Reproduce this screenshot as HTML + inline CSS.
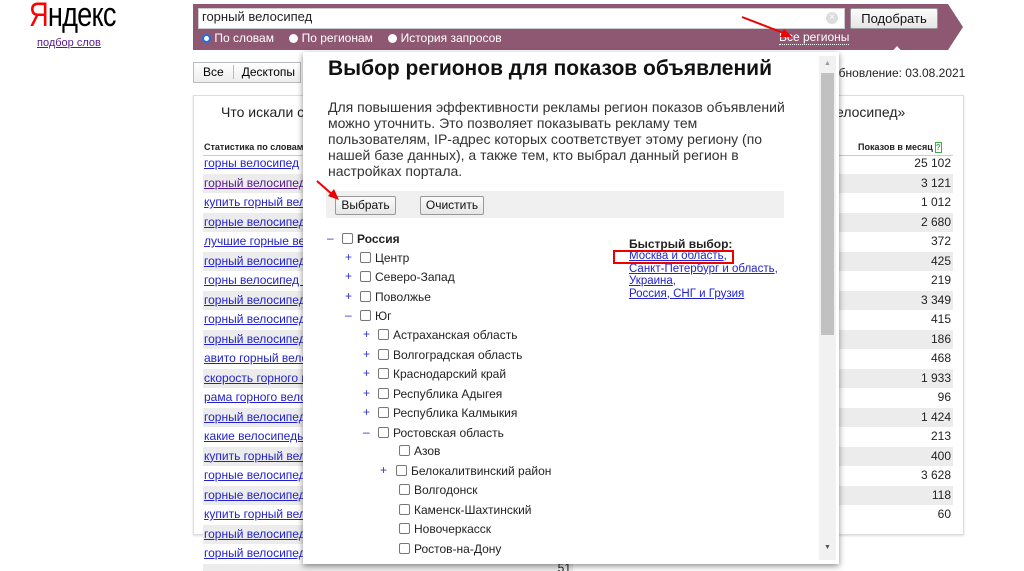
<!DOCTYPE html>
<html><head><meta charset="utf-8">
<style>
*{margin:0;padding:0;box-sizing:border-box}
html,body{width:1024px;height:571px;overflow:hidden}
body{background:#fff;font-family:"Liberation Sans",Arial,sans-serif;position:relative;color:#000}
.a{position:absolute}
a,.lnk{color:#1a0dab;text-decoration:underline}
.row{position:absolute;left:203px;width:750px;height:19.5px;font-size:12px;line-height:19.5px;white-space:nowrap;overflow:hidden}
.row.g{background:#ececec}
.row .k{position:absolute;left:1px;color:#2222cc;text-decoration:underline}
.row .n{position:absolute;right:2px;color:#222}
.tr{position:absolute;font-size:12px;color:#222;white-space:nowrap;line-height:16px}
.cb{display:inline-block;width:11px;height:11px;border:1px solid #777;border-radius:2px;background:#fff;vertical-align:-1px;margin-right:4px}
.pm{position:absolute;color:#3333cc;font-size:12px}
.btn{position:absolute;border:1px solid #999;border-radius:2px;background:linear-gradient(#fbfbfb,#e6e6e6);font-size:12px;text-align:center;line-height:17px;color:#111}
</style></head><body>
<!-- logo -->
<div class="a" style="left:29px;top:-4px;font-size:34px;letter-spacing:-1px;color:#000;transform:scaleX(0.8);transform-origin:0 0;white-space:nowrap"><span style="color:#f00">Я</span>ндекс</div>
<div class="a" style="left:37px;top:37px;font-size:11px;color:#551a8b;text-decoration:underline">подбор слов</div>

<!-- purple bar -->
<svg class="a" style="left:193px;top:4px" width="772" height="46"><polygon points="0,0 755,0 770,23 755,46 0,46" fill="#8f5872"/></svg>
<div class="a" style="left:198px;top:8px;width:647px;height:21px;background:#fff;border:1px solid #ccc"></div>
<div class="a" style="left:202px;top:9px;font-size:13px;color:#222">горный велосипед</div>
<div class="a" style="left:826px;top:12px;width:12px;height:12px;border-radius:50%;background:#ddd;color:#fff;font-size:10px;line-height:12px;text-align:center">×</div>
<div class="btn" style="left:850px;top:8px;width:88px;height:21px;font-size:13px;line-height:19px">Подобрать</div>
<div class="a" style="left:202px;top:31px;font-size:12px;color:#fff;white-space:nowrap">
<span style="display:inline-block;width:9px;height:9px;border-radius:50%;background:#fff;border:2px solid #1e6fe0;vertical-align:-1px"></span> По словам
<span style="display:inline-block;width:9px;height:9px;border-radius:50%;background:#fff;margin-left:12px;vertical-align:-1px"></span> По регионам
<span style="display:inline-block;width:9px;height:9px;border-radius:50%;background:#fff;margin-left:12px;vertical-align:-1px"></span> История запросов</div>
<div class="a" style="left:779px;top:31px;font-size:12px;color:#fff;border-bottom:1px dotted #fff;line-height:13px">Все регионы</div>

<!-- tabs -->
<div class="a" style="left:193px;top:62px;width:108px;height:21px;border:1px solid #bbb;background:linear-gradient(#fff,#eee);font-size:12px;line-height:19px;white-space:nowrap"><span style="padding:0 9px">Все</span><span style="border-left:1px solid #bbb;padding:0 8px">Десктопы</span></div>
<div class="a" style="left:832px;top:66px;font-size:12px;color:#222">обновление: 03.08.2021</div>

<!-- panel -->
<div class="a" style="left:193px;top:95px;width:771px;height:440px;border:1px solid #ddd;background:#fff;box-shadow:0 1px 2px #ddd"></div>
<div class="a" style="left:221px;top:104px;font-size:14px;color:#222;white-space:nowrap">Что искали со словами «горный велосипед»</div>
<div class="a" style="left:836px;top:104px;font-size:14px;color:#222;background:#fff">елосипед»</div>
<div class="a" style="left:204px;top:142px;font-size:9px;font-weight:bold;color:#222">Статистика по словам</div>
<div class="a" style="left:858px;top:142px;font-size:9px;font-weight:bold;color:#222">Показов в месяц<span style="border:1px solid #4a4;color:#4a4;font-size:8px;margin-left:2px">?</span></div>
<div class="a" style="left:203px;top:155px;width:750px;border-top:1px solid #ccc"></div>

<div class="row" style="top:154px"><span class="k">горны велосипед</span><span class="n">25 102</span></div>
<div class="row g" style="top:173.5px"><span class="k" style="color:#551a8b">горный велосипед</span><span class="n">3 121</span></div>
<div class="row" style="top:193px"><span class="k">купить горный велосипед</span><span class="n">1 012</span></div>
<div class="row g" style="top:212.5px"><span class="k">горные велосипеды</span><span class="n">2 680</span></div>
<div class="row" style="top:232px"><span class="k">лучшие горные велосипеды</span><span class="n">372</span></div>
<div class="row g" style="top:251.5px"><span class="k">горный велосипед</span><span class="n">425</span></div>
<div class="row" style="top:271px"><span class="k">горны велосипед с</span><span class="n">219</span></div>
<div class="row g" style="top:290.5px"><span class="k">горный велосипед</span><span class="n">3 349</span></div>
<div class="row" style="top:310px"><span class="k">горный велосипед</span><span class="n">415</span></div>
<div class="row g" style="top:329.5px"><span class="k">горный велосипед</span><span class="n">186</span></div>
<div class="row" style="top:349px"><span class="k">авито горный велосипед</span><span class="n">468</span></div>
<div class="row g" style="top:368.5px"><span class="k">скорость горного велосипеда</span><span class="n">1 933</span></div>
<div class="row" style="top:388px"><span class="k">рама горного велосипеда</span><span class="n">96</span></div>
<div class="row g" style="top:407.5px"><span class="k">горный велосипед</span><span class="n">1 424</span></div>
<div class="row" style="top:427px"><span class="k">какие велосипеды</span><span class="n">213</span></div>
<div class="row g" style="top:446.5px"><span class="k">купить горный велосипед</span><span class="n">400</span></div>
<div class="row" style="top:466px"><span class="k">горные велосипеды</span><span class="n">3 628</span></div>
<div class="row g" style="top:485.5px"><span class="k">горные велосипеды</span><span class="n">118</span></div>
<div class="row" style="top:505px"><span class="k">купить горный велосипед</span><span class="n">60</span></div>
<div class="row g" style="top:524.5px;width:110px"><span class="k">горный велосипед</span></div>
<div class="row" style="top:544px;width:110px"><span class="k">горный велосипед</span></div>
<div class="row g" style="top:563.5px;width:370px"><span class="n" style="top:-5px">51</span></div>

<!-- modal -->
<div class="a" style="left:303px;top:52px;width:536px;height:512px;background:#fff;box-shadow:0 2px 6px rgba(0,0,0,.45)"></div>
<svg class="a" style="left:890px;top:46px" width="14" height="8"><polygon points="0,8 7,0 14,8" fill="#fff"/></svg>
<div class="a" style="left:819px;top:56px;width:17px;height:504px;background:#f1f1f1"></div>
<div class="a" style="left:821px;top:73px;width:13px;height:262px;background:#c1c1c1"></div>
<div class="a" style="left:824px;top:60px;font-size:7px;color:#999">▲</div>
<div class="a" style="left:824px;top:544px;font-size:7px;color:#555">▼</div>

<div class="a" style="left:328px;top:57px;font-size:21px;font-weight:bold;color:#111;white-space:nowrap">Выбор регионов для показов объявлений</div>
<div class="a" style="left:328px;top:99px;width:470px;font-size:14px;line-height:16px;color:#333">Для повышения эффективности рекламы регион показов объявлений можно уточнить. Это позволяет показывать рекламу тем пользователям, IP-адрес которых соответствует этому региону (по нашей базе данных), а также тем, кто выбрал данный регион в настройках портала.</div>
<div class="a" style="left:326px;top:191px;width:458px;height:27px;background:#f0f0f0"></div>
<div class="btn" style="left:335px;top:196px;width:61px;height:19px">Выбрать</div>
<div class="btn" style="left:420px;top:196px;width:64px;height:19px">Очистить</div>

<div class="pm" style="left:327px;top:231px">–</div>
<div class="tr" style="left:342px;top:231px;font-weight:bold"><span class="cb"></span>Россия</div>
<div class="pm" style="left:345px;top:250px">+</div><div class="tr" style="left:360px;top:250px"><span class="cb"></span>Центр</div>
<div class="pm" style="left:345px;top:269px">+</div><div class="tr" style="left:360px;top:269px"><span class="cb"></span>Северо-Запад</div>
<div class="pm" style="left:345px;top:289px">+</div><div class="tr" style="left:360px;top:289px"><span class="cb"></span>Поволжье</div>
<div class="pm" style="left:345px;top:308px">–</div><div class="tr" style="left:360px;top:308px"><span class="cb"></span>Юг</div>
<div class="pm" style="left:363px;top:327px">+</div><div class="tr" style="left:378px;top:327px"><span class="cb"></span>Астраханская область</div>
<div class="pm" style="left:363px;top:347px">+</div><div class="tr" style="left:378px;top:347px"><span class="cb"></span>Волгоградская область</div>
<div class="pm" style="left:363px;top:366px">+</div><div class="tr" style="left:378px;top:366px"><span class="cb"></span>Краснодарский край</div>
<div class="pm" style="left:363px;top:386px">+</div><div class="tr" style="left:378px;top:386px"><span class="cb"></span>Республика Адыгея</div>
<div class="pm" style="left:363px;top:405px">+</div><div class="tr" style="left:378px;top:405px"><span class="cb"></span>Республика Калмыкия</div>
<div class="pm" style="left:363px;top:425px">–</div><div class="tr" style="left:378px;top:425px"><span class="cb"></span>Ростовская область</div>
<div class="tr" style="left:399px;top:443px"><span class="cb"></span>Азов</div>
<div class="pm" style="left:380px;top:463px">+</div><div class="tr" style="left:396px;top:463px"><span class="cb"></span>Белокалитвинский район</div>
<div class="tr" style="left:399px;top:482px"><span class="cb"></span>Волгодонск</div>
<div class="tr" style="left:399px;top:502px"><span class="cb"></span>Каменск-Шахтинский</div>
<div class="tr" style="left:399px;top:521px"><span class="cb"></span>Новочеркасск</div>
<div class="tr" style="left:399px;top:541px"><span class="cb"></span>Ростов-на-Дону</div>

<div class="a" style="left:629px;top:237px;font-size:12px;font-weight:bold;color:#222">Быстрый выбор:</div>
<div class="a" style="left:629px;top:250px;font-size:11.5px;line-height:12.5px;color:#2222cc;white-space:nowrap">
<span class="lnk" style="color:#2222cc">Москва и область</span>,<br>
<span class="lnk" style="color:#2222cc">Санкт-Петербург и область</span>,<br>
<span class="lnk" style="color:#2222cc">Украина</span>,<br>
<span class="lnk" style="color:#2222cc">Россия, СНГ и Грузия</span></div>
<div class="a" style="left:613px;top:250px;width:121px;height:14px;border:2px solid #e00"></div>

<!-- arrows -->
<svg class="a" style="left:0;top:0" width="1024" height="571">
<line x1="742" y1="17" x2="786" y2="34" stroke="#e00" stroke-width="2"/>
<polygon points="792,37 780,37 784,29" fill="#e00"/>
<line x1="317" y1="181" x2="334" y2="196" stroke="#e00" stroke-width="2"/>
<polygon points="339,200 328,196 334,189" fill="#e00"/>
</svg>
</body></html>
